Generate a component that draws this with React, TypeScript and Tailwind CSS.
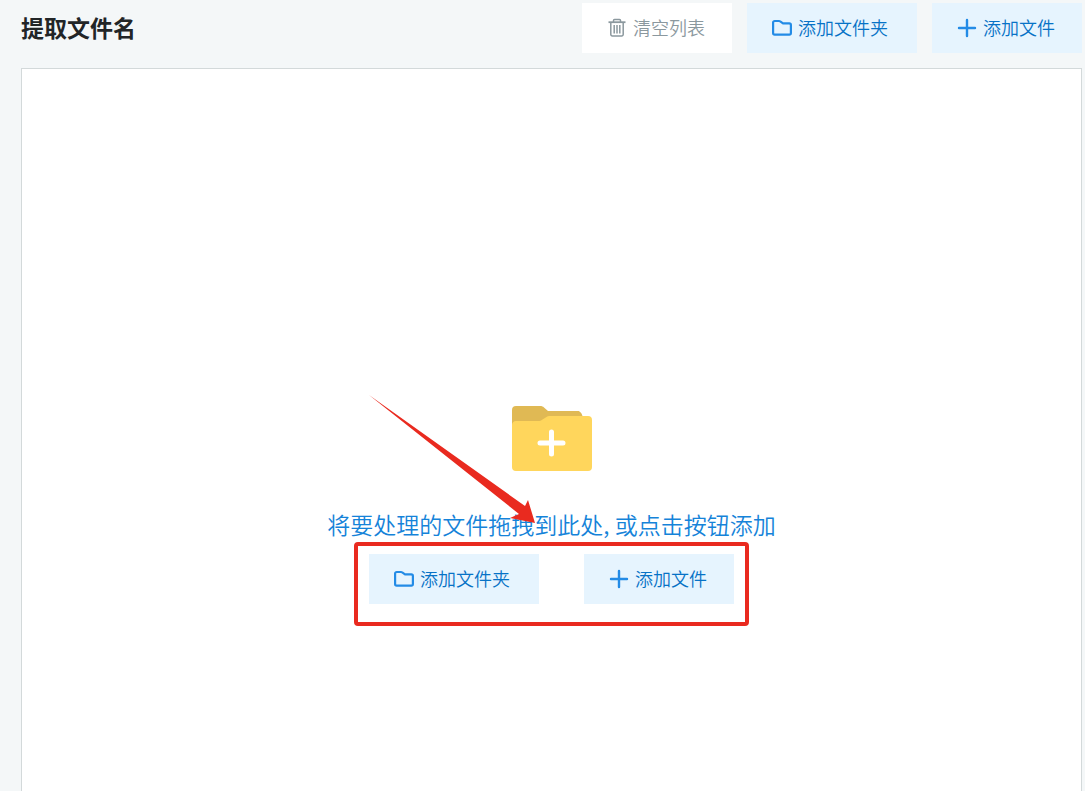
import type { ReactNode } from "react";

function TrashIcon() {
  return (
    <svg className="size-5 shrink-0" viewBox="0 0 20 20" fill="none" stroke="currentColor" strokeWidth="1.500" aria-hidden="true">
      <path d="M1.500 4.200h17" strokeWidth="1.800" />
      <path d="M6.500 4V2.500a1 1 0 0 1 1-1h5a1 1 0 0 1 1 1V4" />
      <path d="M3.800 4.200v12.300a1.500 1.500 0 0 0 1.500 1.500h9.400a1.500 1.500 0 0 0 1.500-1.500V4.200" />
      <path d="M7.200 7v8.500M10 7v8.500M12.800 7v8.500" />
    </svg>
  );
}

function FolderIcon() {
  return (
    <svg className="size-5 shrink-0 text-[#238be6]" viewBox="0 0 20 20" fill="none" stroke="currentColor" strokeWidth="2.200" strokeLinejoin="round" aria-hidden="true">
      <path d="M2.700 3h4.300a2 2 0 0 1 1.200.4L11 5.300h6.300A1.600 1.600 0 0 1 18.900 6.900v8.100a1.600 1.600 0 0 1-1.600 1.600H2.700A1.600 1.600 0 0 1 1.100 15V4.600A1.600 1.600 0 0 1 2.700 3z" />
    </svg>
  );
}

function PlusIcon() {
  return (
    <svg className="size-5 shrink-0 text-[#238be6]" viewBox="0 0 20 20" fill="none" stroke="currentColor" strokeWidth="2.400" strokeLinecap="round" aria-hidden="true">
      <path d="M10 2v16M2 10h16" />
    </svg>
  );
}

function BigFolder() {
  return (
    <svg className="h-[66px] w-20" viewBox="0 0 80 66" aria-hidden="true">
      <path d="M0 20V4a4 4 0 0 1 4-4h24c2 0 3 .5 4 1.500L36 5h30c2 0 4 2 5 7v8z" fill="#e0b954" />
      <path d="M0 19c0-2 1.500-4 4-4h22c2 0 3-.5 4.500-1.500l4-2.500c1-.7 2-1 3.500-1h38a4 4 0 0 1 4 4v47a4 4 0 0 1-4 4H4a4 4 0 0 1-4-4z" fill="#ffd65c" />
      <path d="M39.500 26v22M28 37h23" stroke="#fff" strokeWidth="5" strokeLinecap="round" />
    </svg>
  );
}

function ToolButton({ icon, className, children }: { icon: ReactNode; className: string; children: ReactNode }) {
  return (
    <button type="button" className={`flex h-[50px] shrink-0 items-center gap-1.5 pl-[25px] text-lg whitespace-nowrap ${className}`}>
      {icon}
      <span className="pb-0.5">{children}</span>
    </button>
  );
}

function AddFolderButton() {
  return (
    <ToolButton icon={<FolderIcon />} className="w-[170px] bg-[#e6f4fe] text-[#0672c6]">
      添加文件夹
    </ToolButton>
  );
}

function AddFileButton() {
  return (
    <ToolButton icon={<PlusIcon />} className="w-[150px] bg-[#e6f4fe] text-[#0672c6]">
      添加文件
    </ToolButton>
  );
}

export default function App() {
  return (
    <div className="flex min-h-screen flex-col bg-[#f4f7f8] pr-[3px] pl-[21px] font-['Noto_Sans_CJK_SC',sans-serif] font-[350]">
      <header className="flex items-center justify-between pt-[3px] pb-[15px]">
        <h1 className="pb-0.5 text-[23px] font-bold text-[#222527]">提取文件名</h1>
        <div className="flex gap-[15px]">
          <ToolButton icon={<TrashIcon />} className="w-[150px] bg-white text-[#8b989e]">
            清空列表
          </ToolButton>
          <AddFolderButton />
          <AddFileButton />
        </div>
      </header>

      {/* Drop zone */}
      <main className="flex flex-1 flex-col items-center border border-b-0 border-[#d3d9da] bg-white pt-[337px]">
        <BigFolder />
        <div className="relative mt-9 flex flex-col items-center">
          <p className="pb-0.5 text-[23px] leading-8 text-[#1583d9]">将要处理的文件拖拽到此处, 或点击按钮添加</p>
          <div className="flex gap-[45px] rounded-[4px] border-4 border-[#e92a1f] px-[11px] pt-2 pb-[18px]">
            <AddFolderButton />
            <AddFileButton />
          </div>
          {/* Pointer towards the add buttons */}
          <svg className="pointer-events-none absolute -top-[114px] left-10 h-[130px] w-[170px]" viewBox="0 0 170 130" aria-hidden="true">
            <path d="M2 1L158 112L161 106L168 129L143 124L152 120z" fill="#e92a1f" />
          </svg>
        </div>
      </main>
    </div>
  );
}
